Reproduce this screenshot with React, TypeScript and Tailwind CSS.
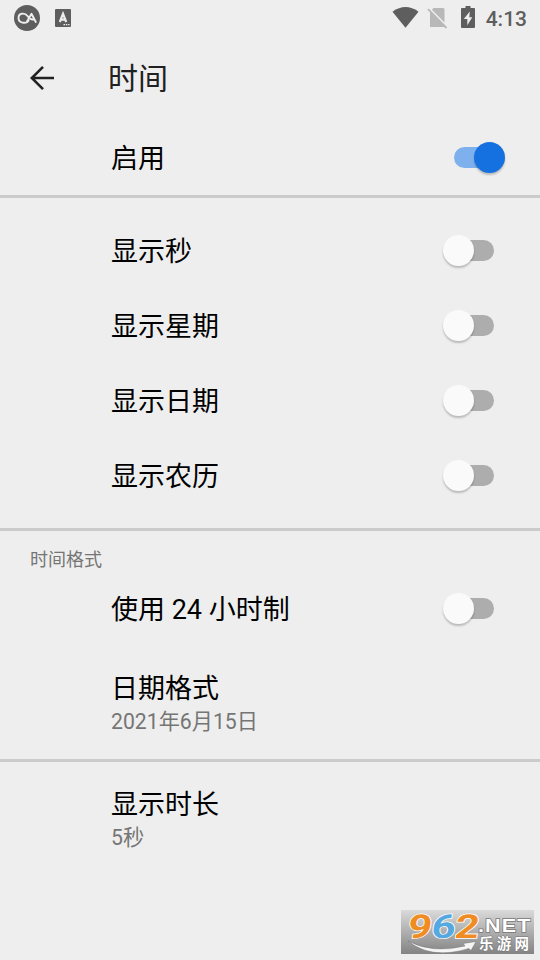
import React, { useState } from "react";

const toggleItems = [
  { key: "second", label: "显示秒" },
  { key: "week", label: "显示星期" },
  { key: "date", label: "显示日期" },
  { key: "lunar", label: "显示农历" },
];

const Switch = ({ checked, onChange }: any) => {
  return (
    <button
      role="switch"
      aria-checked={checked}
      onClick={onChange}
      className={`relative mr-[46px] h-[21px] w-[40px] shrink-0 rounded-full ${
        checked ? "bg-[#7fb0ee]" : "bg-[#adadad]"
      }`}
    >
      <span
        className={`absolute top-[-5px] h-[31px] w-[31px] rounded-full shadow-[0_2px_2px_rgba(0,0,0,0.22)] ${
          checked ? "left-[20px] bg-[#1671e0]" : "left-[-11px] bg-[#fafafa]"
        }`}
      />
    </button>
  );
};

const SwitchRow = ({ label, checked, onChange }: any) => (
  <div className="flex h-[75px] items-center justify-between pl-[111px]">
    <span className="pt-[3px] text-[27px] leading-[36px] text-black">{label}</span>
    <Switch checked={checked} onChange={onChange} />
  </div>
);

const TextRow = ({ label, summary }: any) => (
  <div className="flex flex-col pl-[111px]">
    <span className="text-[27px] leading-[36px] text-black">{label}</span>
    <span className="text-[21.2px] leading-[29px] text-[#757575]">{summary}</span>
  </div>
);

const Divider = () => <div className="h-[3px] shrink-0 bg-[#cbcbcb]" />;

const StatusBar = () => (
  <div className="flex h-9 items-center justify-between pr-[13px] pl-[14px]">
    <div className="flex items-center gap-[15px]">
      <svg width="26" height="26" viewBox="0 0 26 26">
        <circle cx="13" cy="13" r="13" fill="#5e5e5e" />
        <path
          d="M14.500 15.800C12 19 4.500 18.300 4.500 13S11 7.500 13.500 11c1.800 2.500 3 4 6 3.500M13 16.500 17.500 8.800 21.800 17"
          fill="none"
          stroke="#eee"
          strokeWidth="1.900"
          strokeLinecap="round"
          strokeLinejoin="round"
        />
      </svg>
      <svg width="16" height="18" viewBox="0 0 16 18">
        <rect width="16" height="18" rx="1" fill="#5e5e5e" />
        <path
          d="M4.800 13 8 4.700 11.200 13M5.800 10.600h4.400"
          fill="none"
          stroke="#eee"
          strokeWidth="2.200"
        />
        <path d="M8.500 15.700h6" stroke="#eee" strokeWidth="1.300" strokeDasharray="1.500 .8" />
      </svg>
    </div>
    <div className="flex items-center">
      <svg width="88" height="24" viewBox="392 6 88 24">
        <path d="M392.500 11.700Q405.500 2.500 418.500 11.700L405.500 27.800Z" fill="#5e5e5e" />
        <path d="M433.500 8H443q1.500 0 1.500 1.500V27H430V12Z" fill="#b8b8b8" />
        <path d="M428.500 7.700 447.500 27" stroke="#eee" strokeWidth="2" />
        <path d="M428 9.200 446.500 28" stroke="#b8b8b8" strokeWidth="1.800" />
        <path d="M465.500 6h5v2H474q1 0 1 1v18q0 1-1 1h-12q-1 0-1-1V9q0-1 1-1h3.500Z" fill="#5e5e5e" />
        <path d="m469.800 11.500-6 7.500h3.500v6.200l5-8h-3Z" fill="#eee" />
      </svg>
      <span className="ml-[6px] pt-[2px] text-[21px] leading-[24px] font-medium text-[#5e5e5e]">4:13</span>
    </div>
  </div>
);

const Watermark = () => (
  <div className="absolute top-[910px] left-[401px] h-[44px] w-[133px]">
    <svg width="133" height="44" viewBox="0 0 133 44" className="overflow-visible">
      <defs>
        <linearGradient id="plate" x1="0" y1="0" x2="0" y2="1">
          <stop offset="0" stopColor="#dadada" />
          <stop offset="1" stopColor="#838383" />
        </linearGradient>
      </defs>
      <rect width="133" height="44" fill="url(#plate)" />
      <path
        d="M7 31Q31 44 64 36l-2-2.500 13-2-5 9-2-2Q30 50 7 31Z"
        fill="#f5f5f5"
        stroke="#777"
        strokeWidth=".5"
      />
      <text
        transform="translate(5.500 28) skewX(-8) scale(1.270 1)"
        fontFamily="Roboto, sans-serif"
        fontWeight="700"
        fontSize="33"
        letterSpacing="-.3"
        stroke="#fff"
        strokeWidth="1.500"
        paintOrder="stroke"
      >
        <tspan fill="#f08c24">9</tspan>
        <tspan fill="#55a8e0">6</tspan>
        <tspan fill="#f08c24">2</tspan>
      </text>
      <text
        transform="translate(77 22) scale(1.230 1)"
        letterSpacing=".9"
        fontFamily="'Liberation Sans', sans-serif"
        fontWeight="700"
        fontSize="17.500"
        fill="#fff"
        stroke="#777"
        strokeWidth="1.300"
        paintOrder="stroke"
      >
        .NET
      </text>
      <text
        x="78"
        y="39"
        textLength="50"
        fontFamily="'Noto Sans CJK SC', sans-serif"
        fontWeight="700"
        fontSize="14.500"
        fill="#fff"
        stroke="#777"
        strokeWidth="1"
        paintOrder="stroke"
      >
        乐游网
      </text>
    </svg>
  </div>
);

const App = () => {
  const [enabled, setEnabled] = useState(true);
  const [use24Hour, setUse24Hour] = useState(false);
  const [options, setOptions] = useState<any>({});

  return (
    <div className="relative h-[960px] w-[540px] overflow-hidden bg-[#eeeeee] font-['Roboto','Noto_Sans_CJK_SC',sans-serif]">
      <StatusBar />

      {/* Toolbar */}
      <div className="flex h-[84px] items-center pl-[30px]">
        <svg width="24" height="26" viewBox="0 0 24 26" fill="none" stroke="#212121" strokeWidth="2.600">
          <path d="M24 13H2M13 1.800 1.800 13 13 24.200" />
        </svg>
        <h1 className="ml-[54px] pt-[2px] text-[30px] leading-[40px] text-[#212121]">时间</h1>
      </div>

      <SwitchRow label="启用" checked={enabled} onChange={() => setEnabled(!enabled)} />
      <Divider />

      {/* Display options */}
      <div className="py-[15px]">
        {toggleItems.map((item) => (
          <SwitchRow
            key={item.key}
            label={item.label}
            checked={!!options[item.key]}
            onChange={() => setOptions({ ...options, [item.key]: !options[item.key] })}
          />
        ))}
      </div>
      <Divider />

      {/* Time format */}
      <div className="h-[228px]">
        <p className="h-10 pt-[17px] pl-[30px] text-[18px] leading-[24px] text-[#757575]">时间格式</p>
        <SwitchRow label="使用 24 小时制" checked={use24Hour} onChange={() => setUse24Hour(!use24Hour)} />
        <div className="pt-[25px]">
          <TextRow label="日期格式" summary="2021年6月15日" />
        </div>
      </div>
      <Divider />

      <div className="pt-[25px]">
        <TextRow label="显示时长" summary="5秒" />
      </div>

      <Watermark />
    </div>
  );
};

export default App;
